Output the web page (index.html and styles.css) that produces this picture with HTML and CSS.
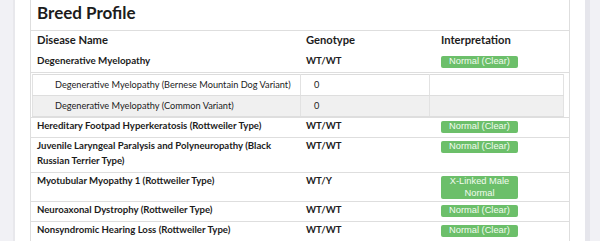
FILE: index.html
```html
<!DOCTYPE html>
<html>
<head>
<meta charset="utf-8">
<link rel="stylesheet" href="styles.css">
</head>
<body>
<div class="page">
  <div class="panel">
    <div class="card">
      <h2 class="title">Breed Profile</h2>
      <table class="profile">
        <colgroup><col class="c1"><col class="c2"><col class="c3"></colgroup>
        <thead>
          <tr><th>Disease Name</th><th>Genotype</th><th>Interpretation</th></tr>
        </thead>
        <tbody>
          <tr class="parent"><td class="name">Degenerative Myelopathy</td><td>WT/WT</td><td><span class="badge">Normal (Clear)</span></td></tr>
          <tr class="sub">
            <td colspan="3">
              <table class="variants">
                <colgroup><col class="v1"><col class="v2"><col class="v3"></colgroup>
                <tr><td class="vname">Degenerative Myelopathy (Bernese Mountain Dog Variant)</td><td>0</td><td></td></tr>
                <tr class="alt"><td class="vname">Degenerative Myelopathy (Common Variant)</td><td>0</td><td></td></tr>
              </table>
            </td>
          </tr>
          <tr><td class="name">Hereditary Footpad Hyperkeratosis (Rottweiler Type)</td><td>WT/WT</td><td><span class="badge">Normal (Clear)</span></td></tr>
          <tr><td class="name">Juvenile Laryngeal Paralysis and Polyneuropathy (Black Russian Terrier Type)</td><td>WT/WT</td><td><span class="badge">Normal (Clear)</span></td></tr>
          <tr><td class="name">Myotubular Myopathy 1 (Rottweiler Type)</td><td>WT/Y</td><td><span class="badge">X-Linked Male Normal</span></td></tr>
          <tr><td class="name">Neuroaxonal Dystrophy (Rottweiler Type)</td><td>WT/WT</td><td><span class="badge">Normal (Clear)</span></td></tr>
          <tr><td class="name">Nonsyndromic Hearing Loss (Rottweiler Type)</td><td>WT/WT</td><td><span class="badge">Normal (Clear)</span></td></tr>
        </tbody>
      </table>
    </div>
  </div>
  <div class="rail"></div>
</div>
</body>
</html>
```
FILE: styles.css
```css
html, body {
  margin: 0;
  padding: 0;
}
body {
  background: #f1f1f5;
  font-family: Lato, "Open Sans", sans-serif;
  color: #1c1c1c;
  overflow: hidden;
}
.page {
  display: flex;
  align-items: flex-start;
  height: 241px;
}
.panel {
  margin-left: 13px;
  width: 540px;
  height: 241px;
  padding: 0 15px;
  background: #fff;
  border-left: 2px solid #e8e8ec;
}
.card {
  border-left: 1px solid #dedede;
  border-right: 1px solid #dedede;
  background: #fff;
}
.rail {
  width: 5px;
  height: 241px;
  background: #e6e6ec;
}
.title {
  margin: 0;
  height: 31px;
  box-sizing: border-box;
  padding: 0 6px;
  font-size: 17px;
  line-height: 25px;
  font-weight: 700;
  border-bottom: 1px solid #dedede;
}
.profile {
  width: 100%;
  table-layout: fixed;
  border-collapse: collapse;
}
.c1 { width: 269px; }
.c2 { width: 135px; }
.profile th {
  text-align: left;
  font-size: 11.2px;
  font-weight: 700;
  line-height: 16px;
  padding: 1px 6px 5px;
}
.profile td {
  font-size: 9.6px;
  font-weight: 700;
  line-height: 15px;
  padding: 0 6px 4px;
  vertical-align: top;
  border-bottom: 1px solid #dedede;
}
.profile tr.parent td.name {
  font-size: 9.8px;
}
.profile tr.sub > td {
  padding: 1px 5px 0 1px;
}
.badge {
  display: inline-block;
  width: 77px;
  margin-top: 3px;
  margin-bottom: -2px;
  background: #6cbf6a;
  color: #f2fbef;
  border-radius: 2px;
  font-family: "Liberation Sans", Arial, sans-serif;
  font-weight: 400;
  font-size: 9.3px;
  line-height: 11.5px;
  text-align: center;
  vertical-align: top;
}
.variants {
  width: 100%;
  table-layout: fixed;
  border-collapse: collapse;
  border: 1px solid #dcdcdc;
}
.v1 { width: 268px; }
.v2 { width: 129px; }
.variants td {
  font-size: 9.2px;
  font-weight: 400;
  line-height: 20px;
  padding: 0 13px;
  white-space: nowrap;
  border-left: 1px solid #e2e2e2;
  border-right: 1px solid #e2e2e2;
}
.variants td.vname {
  padding-left: 22px;
}
.variants tr.alt td {
  background: #f0f0f0;
}
```
